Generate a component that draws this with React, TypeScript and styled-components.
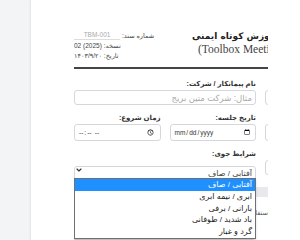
import React from "react";
import styled, { createGlobalStyle } from "styled-components";
import { ChevronDown } from "lucide-react";

const GlobalStyle = createGlobalStyle`
  html, body { margin: 0; padding: 0; background: #f3f4f6; overflow: hidden; }
  body { font-family: "Liberation Sans", "DejaVu Sans", sans-serif; color: #333; }
  * { box-sizing: border-box; }
`;

const Desk = styled.div`
  display: flex;
  min-height: 240px;
`;

const Gutter = styled.div`
  flex: none;
  width: 31px;
  background: #f3f4f6;
  box-shadow: inset -2px 0 2px -1px rgba(0, 0, 0, 0.07);
`;

const Sheet = styled.main`
  flex: 1;
  background: #fff;
  padding: 29px 0 0 43px;
`;

const Clip = styled.div`
  width: 194px;
  height: 211px;
  overflow: hidden;
`;

const Doc = styled.div`
  direction: rtl;
  width: 373px;
`;

const Header = styled.header`
  display: grid;
  grid-template-columns: 1fr 100px 118px;
  align-items: start;
  padding-bottom: 7px;
  border-bottom: 2px solid #444;
`;

const TitleBlock = styled.div`
  grid-column: 2;
  text-align: left;
  color: #333;
  white-space: nowrap;
`;

const Title = styled.h1`
  margin: 0;
  font-family: "DejaVu Sans", sans-serif;
  font-size: 9px;
  font-weight: 700;
  line-height: 14px;
  color: #222;
`;

const Subtitle = styled.div`
  padding-left: 6px;
  font-family: "Liberation Serif", serif;
  font-size: 11.5px;
  line-height: 13px;
  color: #444;
`;

const DocInfo = styled.div`
  grid-column: 3;
  justify-self: end;
  display: flex;
  flex-direction: column;
  align-items: flex-end;
  gap: 2px;
  font-size: 6.5px;
  line-height: 8px;
  color: #444;
  padding-top: 2px;
`;

const InfoRow = styled.div`
  display: flex;
  align-items: flex-end;
  gap: 2px;
`;

const DocNo = styled.span`
  display: inline-block;
  width: 46px;
  text-align: center;
  color: #aaa;
  border-bottom: 1px solid #ddd;
  direction: ltr;
`;

const Ltr = styled.span`
  direction: ltr;
  unicode-bidi: isolate;
`;

const Grid = styled.div`
  display: grid;
  grid-template-columns: minmax(0, 1fr) minmax(0, 1fr);
  column-gap: 9px;
  row-gap: 8px;
  margin-top: 10px;
`;

const Field = styled.div`
  display: flex;
  flex-direction: column;
  position: relative;
  min-width: 0;
`;

const Split = styled.div`
  display: grid;
  grid-template-columns: minmax(0, 1fr) minmax(0, 1fr);
  gap: 9px;
`;

const Label = styled.label`
  font-size: 7px;
  font-weight: 700;
  line-height: 10px;
  color: #333;
  margin-bottom: 1px;
`;

const Input = styled.input<{ $tall?: boolean }>`
  height: ${(p) => (p.$tall ? 17 : 15)}px;
  width: 100%;
  min-width: 0;
  margin: 0;
  padding: 0 3px;
  border: 1px solid #d4d7dc;
  border-radius: 3px;
  font-family: "Liberation Sans", "DejaVu Sans", sans-serif;
  font-size: ${(p) => (p.$tall ? 6.5 : 8.5)}px;
  color: #333;
  background: #fff;

  &::placeholder {
    color: #aaa;
  }
`;

const SelectBox = styled.div`
  position: relative;
  height: 15px;
  margin-top: 2px;
`;

const Select = styled.select`
  appearance: none;
  width: 100%;
  height: 15px;
  margin: 0;
  padding: 0 3px;
  border: 1px solid #d4d7dc;
  border-radius: 3px;
  font-family: "Liberation Sans", "DejaVu Sans", sans-serif;
  font-size: 8px;
  color: #444;
  background: #fff;
`;

const Caret = styled(ChevronDown)`
  position: absolute;
  left: 1px;
  top: 4px;
  color: #333;
  pointer-events: none;
`;

const Options = styled.ul`
  position: absolute;
  top: calc(100% + 1px);
  left: 0;
  right: 0;
  margin: 0;
  padding: 0;
  list-style: none;
  background: #fff;
  border: 1px solid #707070;
  box-shadow: -1px 2px 3px rgba(0, 0, 0, 0.3);
  z-index: 5;
`;

const Option = styled.li<{ $active?: boolean }>`
  height: 11.75px;
  line-height: 11.75px;
  padding: 0 3px;
  font-size: 8px;
  color: ${(p) => (p.$active ? "#fff" : "#222")};
  background: ${(p) => (p.$active ? "#1e90ff" : "transparent")};
`;

const SectionBar = styled.div`
  margin-top: 10px;
  height: 10px;
  background: #e8e9ec;
`;

const Notes = styled.div`
  margin-top: 10px;
  font-size: 6.5px;
  line-height: 12px;
  color: #555;
`;

const weather = [
  "آفتابی / صاف",
  "ابری / نیمه ابری",
  "بارانی / برفی",
  "باد شدید / طوفانی",
  "گرد و غبار",
];

export default function App() {
  return (
    <>
      <GlobalStyle />
      <Desk>
        <Gutter />
        <Sheet>
          <Clip>
            <Doc>
              <Header>
                <TitleBlock>
                  <Title>آموزش کوتاه ایمنی</Title>
                  <Subtitle>(Toolbox Meeting)</Subtitle>
                </TitleBlock>
                <DocInfo>
                  <InfoRow>
                    <span>شماره سند:</span>
                    <DocNo>TBM-001</DocNo>
                  </InfoRow>
                  <InfoRow>
                    <span>
                      نسخه: <Ltr>02 (2025)</Ltr>
                    </span>
                  </InfoRow>
                  <InfoRow>
                    <span>تاریخ: ۱۴۰۳/۹/۲۰</span>
                  </InfoRow>
                </DocInfo>
              </Header>

              <Grid>
                <Field>
                  <Label>پروژه:</Label>
                  <Input />
                </Field>
                <Field>
                  <Label>نام پیمانکار / شرکت:</Label>
                  <Input placeholder="مثال: شرکت متین بریج" />
                </Field>

                <Field>
                  <Label>سرپرست:</Label>
                  <Input $tall />
                </Field>
                <Split>
                  <Field>
                    <Label>تاریخ جلسه:</Label>
                    <Input $tall type="date" dir="ltr" />
                  </Field>
                  <Field>
                    <Label>زمان شروع:</Label>
                    <Input $tall type="time" dir="ltr" />
                  </Field>
                </Split>

                <Field>
                  <Label>مدت:</Label>
                  <Input />
                </Field>
                <Field>
                  <Label>شرایط جوی:</Label>
                  <SelectBox>
                    <Select defaultValue={weather[0]}>
                      {weather.map((w) => (
                        <option key={w}>{w}</option>
                      ))}
                    </Select>
                    <Caret size={8} strokeWidth={3.5} />
                  </SelectBox>
                  <Options>
                    {weather.map((w, i) => (
                      <Option key={w} $active={i === 0}>
                        {w}
                      </Option>
                    ))}
                  </Options>
                </Field>
              </Grid>

              <SectionBar />
              <Notes>
                <div>کارگران دارای تجهیزات حفاظت فردی کامل هستند و از کلاه ایمنی استفاده می‌کنند</div>
                <div>محیط کار دارای علائم هشدار و مسیر تردد ایمن است</div>
                <div>Confined space / فضای بسته و کار در ارتفاع</div>
              </Notes>
            </Doc>
          </Clip>
        </Sheet>
      </Desk>
    </>
  );
}
